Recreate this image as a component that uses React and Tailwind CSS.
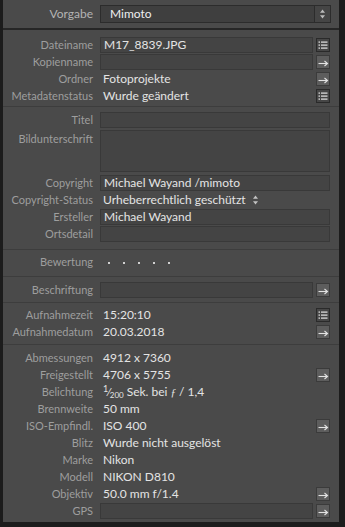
import React from 'react';

function ListIcon() {
  return (
    <div className="w-[14px] h-[14px] border border-[#2a2a2a] bg-[#464646] flex items-center justify-center">
      <svg width="12" height="12" viewBox="0 0 12 12">
        {[3, 6, 9].map((y) => (
          <g key={y}>
            <rect x="1.5" y={y - 0.5} width="1.5" height="1.2" fill="#e6e6e6" />
            <rect x="4" y={y - 0.5} width="6.5" height="1.2" fill="#e6e6e6" />
          </g>
        ))}
      </svg>
    </div>
  );
}

function ArrowIcon() {
  return (
    <div className="w-[14px] h-[14px] border border-[#3b3b3b] bg-[#5d5d5d] flex items-center justify-center">
      <svg width="12" height="12" viewBox="0 0 12 12">
        <path d="M1.5 7.5 H10" stroke="#e2e2e2" strokeWidth="1.1" fill="none" />
        <path d="M7.5 5 L10.5 7.5 L7.5 10" stroke="#e2e2e2" strokeWidth="1.1" fill="none" />
      </svg>
    </div>
  );
}

function UpDown({ color = '#c8c8c8' }) {
  return (
    <svg width="7" height="10" viewBox="0 0 7 10">
      <path d="M3.5 0.5 L6 3.8 H1 Z" fill={color} />
      <path d="M3.5 9.5 L6 6.2 H1 Z" fill={color} />
    </svg>
  );
}

// eine Zeile: Label rechtsbündig, Wert, optional Feld und Knopf
function Row({ label, value, field, icon, children }) {
  return (
    <div className="h-[17px] flex items-center">
      <div className="w-[90px] text-right text-[11px] text-[#9e9e9e] leading-none whitespace-nowrap">{label}</div>
      <div className="ml-[7px] flex-1 h-[16px] flex items-center min-w-0">
        {field ? (
          <div className="w-full h-[16px] bg-[#444444] border border-[#393939] flex items-center pl-[3px] text-[12px] text-[#e4e4e4] leading-none whitespace-nowrap">
            {value}
          </div>
        ) : (
          <div className="pl-[3px] text-[12px] text-[#e4e4e4] leading-none whitespace-nowrap flex items-center">
            {children || value}
          </div>
        )}
      </div>
      {icon ? (
        <div className="ml-[3px] mr-[9px] w-[14px] flex items-center">
          {icon === 'list' ? <ListIcon /> : <ArrowIcon />}
        </div>
      ) : (
        <div className={field ? 'mr-[9px]' : 'w-[17px] mr-[9px]'} />
      )}
    </div>
  );
}

export default function App() {
  return (
    <div
      className="w-[345px] h-[527px] bg-[#4a4a4a] border-l-[3px] border-r-[6px] border-b-[5px] border-[#1c1c1c] flex flex-col overflow-hidden"
      style={{ fontFamily: 'Lato, "Open Sans", sans-serif' }}
    >
      {/* Vorgabe */}
      <div className="h-[28px] flex items-center">
        <div className="w-[90px] text-right text-[12px] text-[#b4b4b4] leading-none">Vorgabe</div>
        <div className="ml-[7px] mr-[8px] flex-1 h-[18px] bg-[#3f3f3f] border border-[#2c2c2c] flex items-center">
          <div className="flex-1 pl-[9px] text-[12px] text-[#eeeeee] leading-none">Mimoto</div>
          <div className="w-[16px] h-full border-l border-[#2c2c2c] bg-[#454545] flex items-center justify-center">
            <UpDown color="#bdbdbd" />
          </div>
        </div>
      </div>
      <div className="h-[2px] bg-[#262626]" />

      {/* Datei */}
      <div className="pt-[6px] pb-[2px]">
        <Row label="Dateiname" value="M17_8839.JPG" field icon="list" />
        <Row label="Kopienname" value="" field icon="arrow" />
        <Row label="Ordner" value="Fotoprojekte" icon="arrow" />
        <Row label="Metadatenstatus" value="Wurde geändert" icon="list" />
      </div>

      {/* IPTC */}
      <div className="border-t border-[#3d3d3d] pt-[4px] pb-[7px]">
        <Row label="Titel" value="" field />
        <div className="h-[46px] flex items-start">
          <div className="w-[90px] text-right text-[11px] text-[#9e9e9e] leading-none pt-[5px]">Bildunterschrift</div>
          <div className="ml-[7px] mr-[9px] flex-1 h-[42px] mt-[2px] bg-[#444444] border border-[#393939]" />
        </div>
        <Row label="Copyright" value="Michael Wayand /mimoto" field />
        <Row label="Copyright-Status">
          <span>Urheberrechtlich geschützt</span>
          <span className="ml-[6px] flex items-center"><UpDown color="#c4c4c4" /></span>
        </Row>
        <Row label="Ersteller" value="Michael Wayand" field />
        <Row label="Ortsdetail" value="" field />
      </div>

      {/* Bewertung */}
      <div className="border-t border-[#3d3d3d] pt-[3px] pb-[6px]">
        <Row label="Bewertung">
          <div className="flex items-center gap-[13px] pl-[5px] pt-[2px]">
            {[0, 1, 2, 3, 4].map((i) => (
              <span key={i} className="w-[2px] h-[2px] bg-[#d0d0d0]" />
            ))}
          </div>
        </Row>
      </div>

      {/* Beschriftung */}
      <div className="border-t border-[#3d3d3d] pt-[4px] pb-[4px]">
        <Row label="Beschriftung" value="" field icon="arrow" />
      </div>

      {/* Aufnahme */}
      <div className="border-t border-[#3d3d3d] pt-[3px] pb-[4px]">
        <Row label="Aufnahmezeit" value="15:20:10" icon="list" />
        <Row label="Aufnahmedatum" value="20.03.2018" icon="arrow" />
      </div>

      {/* EXIF */}
      <div className="border-t border-[#3d3d3d] pt-[4px] pb-[3px]">
        <Row label="Abmessungen" value="4912 x 7360" />
        <Row label="Freigestellt" value="4706 x 5755" icon="arrow" />
        <Row label="Belichtung">
          <span className="text-[9px] relative -top-[3px]">1</span>
          <span className="text-[11px]">⁄</span>
          <span className="text-[8px] relative top-[3px] mr-[3px]">200</span>
          <span>Sek. bei <span className="italic text-[11px]" style={{ fontFamily: '"Liberation Serif", serif' }}>ƒ</span> / 1,4</span>
        </Row>
        <Row label="Brennweite" value="50 mm" />
        <Row label="ISO-Empfindl." value="ISO 400" icon="arrow" />
        <Row label="Blitz" value="Wurde nicht ausgelöst" />
        <Row label="Marke" value="Nikon" />
        <Row label="Modell" value="NIKON D810" />
        <Row label="Objektiv" value="50.0 mm f/1.4" icon="arrow" />
        <Row label="GPS" value="" field icon="arrow" />
      </div>
    </div>
  );
}
